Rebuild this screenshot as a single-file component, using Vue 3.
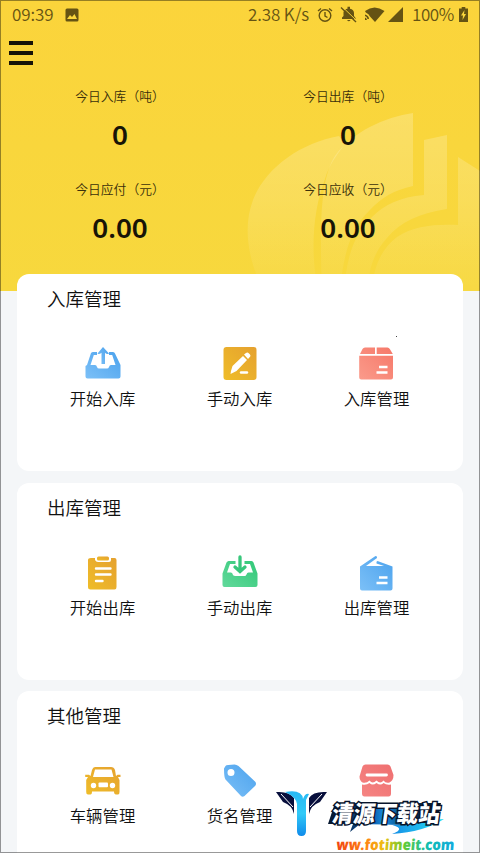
<script setup>
const stats = [
  { label: '今日入库（吨）', value: '0' },
  { label: '今日出库（吨）', value: '0' },
  { label: '今日应付（元）', value: '0.00' },
  { label: '今日应收（元）', value: '0.00' },
]
const groups = [
  { title: '入库管理', items: [{ icon: 'up', label: '开始入库' }, { icon: 'edit', label: '手动入库' }, { icon: 'box', label: '入库管理' }] },
  { title: '出库管理', items: [{ icon: 'clip', label: '开始出库' }, { icon: 'down', label: '手动出库' }, { icon: 'open', label: '出库管理' }] },
  { title: '其他管理', items: [{ icon: 'car', label: '车辆管理' }, { icon: 'tag', label: '货名管理' }, { icon: 'shop', label: '店铺管理' }] },
]
</script>

<template>
  <main class="screen">
    <svg class="defs" width="0" height="0" aria-hidden="true">
      <defs>
        <linearGradient id="blue" x1="0" y1="1" x2="1" y2="0"><stop stop-color="#7cc0f7" /><stop offset="1" stop-color="#4ba2ed" /></linearGradient>
        <linearGradient id="gold" x1="0" y1="1" x2="1" y2="0"><stop stop-color="#efbd29" /><stop offset="1" stop-color="#e5a12f" /></linearGradient>
        <linearGradient id="coral" x1="0" y1="1" x2="1" y2="0"><stop stop-color="#fa9b8b" /><stop offset="1" stop-color="#f67869" /></linearGradient>
        <linearGradient id="pink" x1="0" y1="1" x2="1" y2="0"><stop stop-color="#f58583" /><stop offset="1" stop-color="#ef6f70" /></linearGradient>
        <linearGradient id="green" x1="0" y1="1" x2="1" y2="0"><stop stop-color="#62d99b" /><stop offset="1" stop-color="#32c878" /></linearGradient>
      </defs>
    </svg>

    <header class="hero">
      <svg class="emblem" width="234" height="182" viewBox="0 0 234 182">
        <defs>
          <linearGradient id="leaf" gradientUnits="userSpaceOnUse" x1="0" y1="0" x2="0" y2="182">
            <stop stop-color="#fff" stop-opacity=".22" />
            <stop offset=".5" stop-color="#fff" stop-opacity=".15" />
            <stop offset="1" stop-color="#fff" stop-opacity=".03" />
          </linearGradient>
        </defs>
        <g fill="url(#leaf)">
          <path d="M93 27C55 34 20 58 7 91C-4 120 3 154 18 182H72C64 142 67 101 79 70C83 56 90 47 99 35Z" />
          <path d="M167 4C139 8 106 23 89 47C76 67 73 104 76 182H94C97 146 105 119 123 102C136 88 148 81 167 77Z" />
          <path d="M178 31L201 26V100C174 104 154 113 141 129C128 143 122 161 122 182H98C101 145 109 124 126 108C138 96 154 88 178 86Z" />
          <path d="M212 48L234 62V182H126C127 158 136 139 151 128C168 117 188 115 212 116Z" />
        </g>
      </svg>
      <div class="status">
        <div class="status-left">
          <span class="clock">09:39</span>
          <svg width="14" height="14" viewBox="0 0 14 14"><rect x=".5" y=".5" width="13" height="13" rx="1.5" fill="#655313" /><path d="M2 11L5 7L7 9L9.500 6L12 11Z" fill="#fad63c" /></svg>
        </div>
        <div class="status-right">
          <span class="speed">2.38 K/s</span>
          <svg class="alarm" width="16" height="16" viewBox="0 0 16 16" fill="none" stroke="#655313" stroke-width="1.400"><circle cx="8" cy="8.500" r="5.800" /><path d="M1 4L4 1.500M12 1.500L15 4M8 5V9L10.500 10.500" /></svg>
          <svg class="bell" width="17" height="17" viewBox="0 0 17 17"><path d="M2 13V11.500L3.500 10V6C4 4 5.500 3 7.500 2.700V.8H10V2.700C12.500 3.200 14 5 14 7V10L15.500 12V13ZM7 14H10.500Q9 16.500 7 14" fill="#655313" /><path d="M3 1.500L17 15" stroke="#fad63c" stroke-width="1" /><path d="M1 1.500L16 16" stroke="#655313" stroke-width="1.400" /></svg>
          <svg class="wifi" width="21" height="16" viewBox="0 0 21 16" fill="#655313"><path d="M1 4Q10.500-3 20.500 4L11 15L6 9.500Q5 7 1.800 5.500Z" /><path d="M1 7.500Q5 8.500 5 12H3.500Q3 9.500 1 9ZM1 10.500Q2.800 11 3 13H1Z" /></svg>
          <svg class="signal" width="15" height="15" viewBox="0 0 15 15"><path d="M15 0V15H0Z" fill="#655313" /></svg>
          <span class="percent">100%</span>
          <svg class="battery" width="9" height="15" viewBox="0 0 9 15"><path d="M2.700 0H6.300V1.500H9V15H0V1.500H2.700Z" fill="#655313" /><path d="M5.500 3L2 8.500H4L3.500 13L7 7H5Z" fill="#fad63c" /></svg>
        </div>
      </div>
      <button class="menu" aria-label="菜单"><i></i><i></i><i></i></button>
      <section class="stats">
        <div v-for="s in stats" :key="s.label" class="stat">
          <span class="stat-label">{{ s.label }}</span>
          <strong class="stat-value">{{ s.value }}</strong>
        </div>
      </section>
    </header>

    <div class="cards">
      <section v-for="g in groups" :key="g.title" class="card">
        <h2>{{ g.title }}</h2>
        <div class="grid">
          <div v-for="it in g.items" :key="it.icon" class="item">
            <svg width="38" height="38" viewBox="0 0 38 38">
              <g v-if="it.icon === 'up'" fill="url(#blue)">
                <path d="M3 21L7 9Q8 8 9 8H13V11H9.800L6.500 21H11Q12.500 21 13 23Q13.500 24.500 15 24.500H23Q24.500 24.500 25 23Q25.500 21 27 21H31.500L28.200 11H25V8H29Q30.500 8 31 9.500L36.500 21V32.500Q36.500 34.500 34.500 34.500H3.500Q1.500 34.500 1.500 32.500V22Z" />
                <path d="M19 3L25 9.500Q23 11 21 8.800V20H17.500V8.800Q15 11 13.500 9.500Z" />
              </g>
              <g v-else-if="it.icon === 'edit'">
                <rect x="2.500" y="3" width="33" height="33" rx="3" fill="url(#gold)" />
                <path d="M10 27L11.500 22L22 12L26 16L15.500 27L9.500 30ZM23 10.500L25 9Q26.500 8 28 9.500Q30.500 11.500 28.800 13L27 15Z" fill="#fff" /><path d="M20 28.500H26" stroke="#fff" stroke-width="2.400" stroke-linecap="round" />
              </g>
              <g v-else-if="it.icon === 'box'">
                <path d="M7 3.500H17V10H2L4.500 5Q5.300 3.500 7 3.500ZM18.700 3.500H29.500Q31 3.500 31.800 5L34.800 10H18.700ZM1.200 11.800H35V33.500Q35 35.500 33 35.500H3.200Q1.200 35.500 1.200 33.500Z" fill="url(#coral)" />
                <path d="M21 23H29.500M18.500 28.500H29.500" stroke="#fff" stroke-width="2.400" />
              </g>
              <g v-else-if="it.icon === 'clip'">
                <path d="M7 5H11V7Q12 9 14 9H25Q27 9 27 7V5H30.500Q32.500 5 32.500 7V34Q32.500 36.500 30.500 36.500H6.500Q4 36.500 4 34V7Q4 5 7 5Z" fill="url(#gold)" /><rect x="13" y="3.500" width="12" height="4" rx="1.500" fill="url(#gold)" />
                <path d="M12 15.500H26.500M12 21.500H26.500M12 28H18.500" stroke="#fff" stroke-width="2.400" stroke-linecap="round" />
              </g>
              <g v-else-if="it.icon === 'down'">
                <path d="M1.500 20.500L5.500 9.500Q6.500 8 7.500 8H14.500V11H9L6 19.500H10Q11.500 19.500 12 22Q12.500 23 14.500 23H23.500Q25 23 25.500 21.500Q26 19.500 27.500 19.500H32L29 11H23.500V8H30.500Q32 8 32.500 9.500L36.500 20.500V32Q36.500 34 34.500 34H3.500Q1.500 34 1.500 32Z" fill="url(#green)" />
                <path d="M19 4V17.500M14 14L19 18.500L24 14" fill="none" stroke="#37c77b" stroke-width="3.300" stroke-linecap="round" />
              </g>
              <g v-else-if="it.icon === 'open'">
                <path d="M2 13.500L17.500 3Q19.500 3 19 5L8 13H26L18.500 10.500Q18 8 19.500 8L34.500 13.500V35.500Q34.500 37.500 32.500 37.500H4Q2 37.500 2 35.500Z" fill="url(#blue)" /><path d="M21 24.500H29.500M18.500 30H29.500" stroke="#fff" stroke-width="2.400" />
              </g>
              <g v-else-if="it.icon === 'car'">
                <path fill-rule="evenodd" d="M11 6H27Q30 6 31 9L32 15L33.500 13.800H36.500V16H34L35.500 19V31Q35.500 33.500 34 33.500H32Q30 33.500 30 30.500H8Q8 33.500 6.500 33.500H4Q2.200 33.500 2.200 31V19L4 16H1.200V13.800H5L6.500 15L8 9Q9 6 11 6ZM11 8.500L9 16H29.500L27.500 8.500Z" fill="url(#gold)" />
                <g fill="#fff"><circle cx="9.500" cy="24.500" r="2.700" /><circle cx="28.500" cy="24.500" r="2.700" /><rect x="14.500" y="21.500" width="9.500" height="4.700" rx="1" /></g>
              </g>
              <g v-else-if="it.icon === 'tag'">
                <path fill-rule="evenodd" d="M4.500 5Q5.500 3.500 13.500 3.500Q15.500 3.500 17.500 5L34 20.500Q36 22.500 34 25L23.500 35Q21.500 36.500 20 35L4.500 18.500Q3 16.500 3 7.500ZM13.500 11.500A3.500 3.500 0 1 0 6.500 11.500A3.500 3.500 0 1 0 13.500 11.500Z" fill="url(#blue)" />
              </g>
              <g v-else transform="translate(-.5 1.500)">
                <path d="M8 2H30Q32 2 33 4L36 12.500Q36 18 32 20Q28 21 26 18Q23 22 19 18Q15 22 12 18Q9 21 5 20Q2 18 2 14L5 4Q6 2 8 2ZM4.500 22Q9 23 12 20.500Q15 23.500 19 20.500Q23 23.500 26 20.500Q29 23 33.500 22V31Q33.500 34 31 34H7Q4.500 34 4.500 31Z" fill="url(#pink)" /><path d="M9.500 12.500H29" stroke="#fff" stroke-width="2.800" stroke-linecap="round" />
              </g>
            </svg>
            <span>{{ it.label }}</span>
          </div>
        </div>
      </section>
    </div>

    <i class="speck"></i>
    <svg class="brand" width="184" height="68" viewBox="0 0 184 68">
      <defs>
        <linearGradient id="cyan" x1="0" y1="0" x2="0" y2="1"><stop stop-color="#27b9f4" /><stop offset=".5" stop-color="#31c9f8" /><stop offset="1" stop-color="#0f8bea" /></linearGradient>
        <linearGradient id="swoosh" x1="0" x2="1"><stop stop-color="#1487e5" /><stop offset="1" stop-color="#28dff4" /></linearGradient>
        <linearGradient id="plate" x1="0" x2="1"><stop stop-color="#06152c" /><stop offset=".35" stop-color="#084b91" /><stop offset=".5" stop-color="#178de3" /><stop offset=".7" stop-color="#06355c" /><stop offset="1" stop-color="#071421" /></linearGradient>
        <linearGradient id="rainbow" x1="0" x2="1"><stop stop-color="#f04413" /><stop offset=".25" stop-color="#ff8415" /><stop offset=".4" stop-color="#eebf12" /><stop offset=".58" stop-color="#61cb37" /><stop offset=".78" stop-color="#12bdb3" /><stop offset="1" stop-color="#12aadd" /></linearGradient>
      </defs>
      <path d="M1 7Q14 6 19 13V29Q17 20 8 17ZM52 7Q38 6 34 13V29Q36 20 45 17Z" fill="#080f3c" />
      <path d="M6 9L18 22M47 9L35 22" stroke="#fff" stroke-width="1" />
      <path d="M10 7Q27 4 28 14Q30 8 34 9L31 15V46Q31 51 26.500 51Q22 51 22 46V19Q21 12 10 7Z" fill="url(#cyan)" />
      <path d="M113 39Q132 42 155 35L169 34Q149 47 117 49Q133 43 113 39Z" fill="url(#swoosh)" />
      <path d="M60 18L166 18L162 38H141L131 40L85 39L75 47L78 39L53 39Z" fill="url(#plate)" />
      <text class="brand-name" transform="translate(56 37) skewX(-8)" textLength="108" lengthAdjust="spacingAndGlyphs">清源下载站</text>
      <text class="brand-url" transform="translate(61 64.5) skewX(-5)" textLength="118" lengthAdjust="spacingAndGlyphs" fill="url(#rainbow)">ww.fotimeit.com</text>
    </svg>
  </main>
</template>

<style>
body { margin: 0; overflow: hidden; }
</style>
<style scoped>
.screen { position: relative; box-sizing: border-box; width: 480px; height: 853px; overflow: hidden; background: #f4f6f8; color: #222; font-family: "Noto Sans", "Noto Sans CJK SC", sans-serif; }
.screen::after { content: ""; position: absolute; inset: 0; border: 1px solid rgba(0, 0, 0, .4); pointer-events: none; }
.defs { position: absolute; }
.hero { position: relative; height: 291px; box-sizing: border-box; background: linear-gradient(#fbd43b, #f7d83d); }
.emblem { position: absolute; left: 246px; top: 109px; }
.status { display: flex; justify-content: space-between; height: 29px; padding: 0 12px; color: #655313; font-family: "Noto Sans CJK SC", sans-serif; font-weight: 350; font-size: 17px; line-height: 28px; }
.status-left, .status-right { display: flex; align-items: center; }
.status-left span, .status-right span { margin-top: -1px; }
.status-left { gap: 10px; }
.clock { width: 43px; letter-spacing: -.1px; }
.speed { width: 64px; white-space: nowrap; letter-spacing: -.1px; }
.alarm { margin-left: 5px; }
.bell { margin-left: 7px; }
.wifi { margin-left: 7px; }
.signal { margin-left: 3px; }
.percent { margin-left: 9px; width: 42px; letter-spacing: -.4px; }
.battery { margin-left: 5px; }
.menu { display: flex; flex-direction: column; gap: 6px; width: 24px; margin: 12px 0 0 9px; padding: 0; border: 0; background: none; }
.menu i { height: 4px; width: 24px; background: #171308; }
.stats { position: relative; display: grid; grid-template-columns: 228px 228px; grid-auto-rows: 93px; padding: 21px 0 0 6px; }
.stat { display: flex; flex-direction: column; align-items: center; }
.stat-label { font: 350 12.8px/20px "Noto Sans CJK SC", sans-serif; color: #3b300b; }
.stat-value { margin-top: 9px; font: 600 27.8px/38px "Noto Sans", sans-serif; color: #171407; }
.cards { position: relative; display: flex; flex-direction: column; gap: 11.5px; margin-top: -17px; padding: 0 17px; }
.card { height: 197px; box-sizing: border-box; border-radius: 12px; background: #fff; padding: 11px 17px 0; }
h2 { margin: 0 0 0 13px; font: 350 18.500px/27px "Noto Sans CJK SC", sans-serif; color: #111; }
.grid { display: grid; grid-template-columns: repeat(3, 137px); margin-top: 32px; }
.item { display: flex; flex-direction: column; align-items: center; }
.item svg { display: block; }
.item span { margin-top: 3px; font: 350 16.400px/26px "Noto Sans CJK SC", sans-serif; color: #111; }
.speck { position: absolute; left: 396px; top: 336px; width: 1px; height: 1px; background: #444; }
.brand { position: absolute; left: 275px; top: 785px; overflow: visible; }
.brand-name { font: 900 23px "Noto Sans CJK SC", sans-serif; fill: #fff; stroke: #07142c; stroke-width: 3px; paint-order: stroke; }
.brand-url { font: 800 15px "Open Sans", sans-serif; }
</style>
